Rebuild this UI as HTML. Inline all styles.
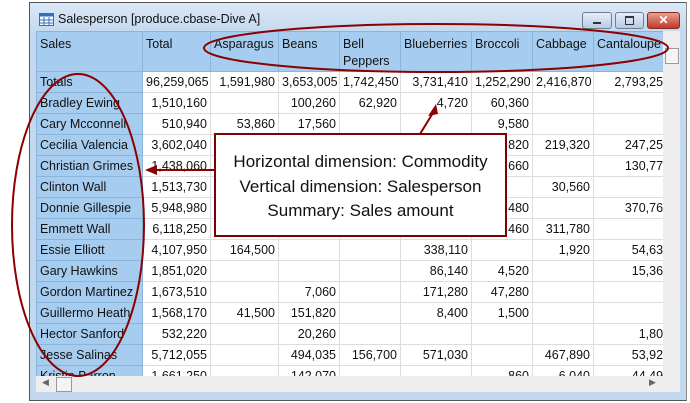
<!DOCTYPE html>
<html><head><meta charset="utf-8"><style>
body{margin:0;width:690px;height:403px;background:#fff;position:relative;overflow:hidden;font-family:"Liberation Sans",sans-serif;}
.win{position:absolute;left:29px;top:2px;width:656px;height:397px;border:1px solid #555;background:linear-gradient(#dbe8f6,#c4d9ef 30px,#c2d8ef);border-right-color:#888;}
.title{position:absolute;left:58px;top:12px;font-size:12.5px;color:#111;}
.grid{position:absolute;left:36px;top:31px;width:627px;height:345px;overflow:hidden;background:#fff;}
table{border-collapse:collapse;table-layout:fixed;font-size:12.5px;color:#111;width:637px;}
td{height:21px;border:1px solid #ddd;padding:0 3px;text-align:right;white-space:nowrap;overflow:hidden;box-sizing:border-box;}
td:first-child{text-align:left;background:#a6cdf0;border-color:#8ab4d8;}
tr.h td{background:#a6cdf0;height:40px;vertical-align:top;text-align:left;border-color:#8ab4d8;padding-top:4px;line-height:17px;white-space:normal}
.vs{position:absolute;left:663px;top:31px;width:17px;height:345px;background:#eee;}
.hs{position:absolute;left:36px;top:376px;width:644px;height:16px;background:#eee;}
.btn{position:absolute;top:12px;height:15px;border:1px solid #6c7f98;border-radius:3px;background:linear-gradient(#e6eef8,#b8cbe2);}
</style></head><body>
<div class="win"></div>
<svg style="position:absolute;left:39px;top:13px" width="15" height="13"><rect x="0.5" y="0.5" width="14" height="12" fill="#fff" stroke="#2a72c4"/><rect x="0.5" y="0.5" width="14" height="3" fill="#2a72c4"/><path d="M5 4v9M10 4v9M1 7h13M1 10h13" stroke="#2a72c4"/></svg>
<div class="title">Salesperson [produce.cbase-Dive A]</div>
<div class="btn" style="left:582px;width:28px"><div style="position:absolute;left:10px;top:9px;width:8px;height:2px;background:#333"></div></div>
<div class="btn" style="left:615px;width:27px"><div style="position:absolute;left:9px;top:3px;width:7px;height:6px;border:1px solid #333;border-top-width:2px"></div></div>
<div class="btn" style="left:647px;width:31px;background:linear-gradient(#e8a090,#c0392b);border-color:#8a2a20;color:#fff;font-size:12px;font-weight:bold;text-align:center;line-height:15px">✕</div>
<div class="grid"><table>
<colgroup><col style="width:106px"><col style="width:68px"><col style="width:68px"><col style="width:61px"><col style="width:61px"><col style="width:71px"><col style="width:61px"><col style="width:61px"><col style="width:80px"></colgroup>
<tr class="h"><td>Sales</td><td>Total</td><td>Asparagus</td><td>Beans</td><td>Bell Peppers</td><td>Blueberries</td><td>Broccoli</td><td>Cabbage</td><td>Cantaloupe</td></tr>
<tr><td>Totals</td><td>96,259,065</td><td>1,591,980</td><td>3,653,005</td><td>1,742,450</td><td>3,731,410</td><td>1,252,290</td><td>2,416,870</td><td>2,793,250</td></tr>
<tr><td>Bradley Ewing</td><td>1,510,160</td><td></td><td>100,260</td><td>62,920</td><td>4,720</td><td>60,360</td><td></td><td></td></tr>
<tr><td>Cary Mcconnell</td><td>510,940</td><td>53,860</td><td>17,560</td><td></td><td></td><td>9,580</td><td></td><td></td></tr>
<tr><td>Cecilia Valencia</td><td>3,602,040</td><td></td><td></td><td></td><td></td><td>820</td><td>219,320</td><td>247,250</td></tr>
<tr><td>Christian Grimes</td><td>1,438,060</td><td></td><td></td><td></td><td></td><td>660</td><td></td><td>130,770</td></tr>
<tr><td>Clinton Wall</td><td>1,513,730</td><td></td><td></td><td></td><td></td><td></td><td>30,560</td><td></td></tr>
<tr><td>Donnie Gillespie</td><td>5,948,980</td><td></td><td></td><td></td><td></td><td>480</td><td></td><td>370,760</td></tr>
<tr><td>Emmett Wall</td><td>6,118,250</td><td></td><td></td><td></td><td></td><td>460</td><td>311,780</td><td></td></tr>
<tr><td>Essie Elliott</td><td>4,107,950</td><td>164,500</td><td></td><td></td><td>338,110</td><td></td><td>1,920</td><td>54,630</td></tr>
<tr><td>Gary Hawkins</td><td>1,851,020</td><td></td><td></td><td></td><td>86,140</td><td>4,520</td><td></td><td>15,360</td></tr>
<tr><td>Gordon Martinez</td><td>1,673,510</td><td></td><td>7,060</td><td></td><td>171,280</td><td>47,280</td><td></td><td></td></tr>
<tr><td>Guillermo Heath</td><td>1,568,170</td><td>41,500</td><td>151,820</td><td></td><td>8,400</td><td>1,500</td><td></td><td></td></tr>
<tr><td>Hector Sanford</td><td>532,220</td><td></td><td>20,260</td><td></td><td></td><td></td><td></td><td>1,800</td></tr>
<tr><td>Jesse Salinas</td><td>5,712,055</td><td></td><td>494,035</td><td>156,700</td><td>571,030</td><td></td><td>467,890</td><td>53,920</td></tr>
<tr><td>Kristin Barron</td><td>1,661,250</td><td></td><td>142,070</td><td></td><td></td><td>860</td><td>6,040</td><td>44,490</td></tr>
</table></div>
<div class="vs"><div style="position:absolute;left:2px;top:17px;width:12px;height:14px;border:1px solid #999;background:#f4f4f4"></div></div>
<div class="hs"><div style="position:absolute;left:20px;top:1px;width:14px;height:13px;border:1px solid #999;background:#f4f4f4"></div><span style="position:absolute;left:6px;top:1px;font-size:9px;color:#666">◀</span><span style="position:absolute;left:613px;top:1px;font-size:9px;color:#666">▶</span></div>
<svg style="position:absolute;left:0;top:0" width="690" height="403">
<ellipse cx="436" cy="48" rx="232" ry="24" fill="none" stroke="#8b0000" stroke-width="2"/>
<ellipse cx="78" cy="225" rx="66" ry="151" fill="none" stroke="#8b0000" stroke-width="2"/>
<path d="M420 134 L436 108" stroke="#8b0000" stroke-width="2"/><path d="M436 104 L428 116 L438 114Z" fill="#8b0000"/>
<path d="M214 170 L150 170" stroke="#8b0000" stroke-width="2"/><path d="M145 170 L157 165 L157 175Z" fill="#8b0000"/>
</svg>
<div style="position:absolute;left:214px;top:133px;width:289px;border:2px solid #800000;background:#fff;text-align:center;font-size:17px;line-height:24.5px;color:#111;padding-top:15px;height:85px">Horizontal dimension: Commodity<br>Vertical dimension: Salesperson<br>Summary: Sales amount</div>
</body></html>
